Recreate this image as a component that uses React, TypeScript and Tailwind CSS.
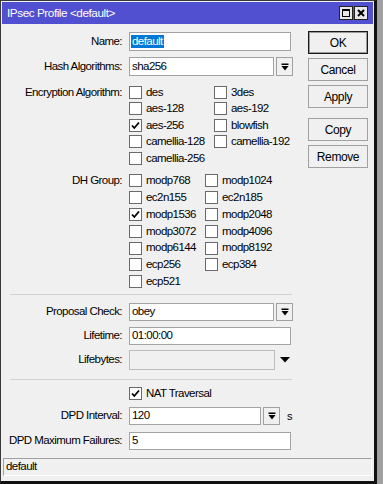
import React from "react";

const FONT = { fontFamily: '"Liberation Sans", Arial, sans-serif' };

function Check({ checked }: { checked?: boolean }) {
  return (
    <div className="w-[13px] h-[13px] border border-[#6a6a6a] bg-white flex items-center justify-center shrink-0">
      {checked && (
        <svg width="11" height="11" viewBox="0 0 11 11">
          <path d="M2 5.5 L4.3 8 L9 2.5" stroke="#000" strokeWidth="1.8" fill="none" />
        </svg>
      )}
    </div>
  );
}

function DropIcon() {
  return (
    <svg width="8" height="8" viewBox="0 0 8 8">
      <rect x="0.5" y="0.5" width="7" height="1.5" fill="#000" />
      <polygon points="0.5,3 7.5,3 4,7.5" fill="#000" />
    </svg>
  );
}

function DropBtn({ h = 19 }: { h?: number }) {
  return (
    <div
      className="w-[17px] border border-[#a0a0a0] bg-[#f0f0f0] flex items-center justify-center shrink-0"
      style={{ height: h }}
    >
      <DropIcon />
    </div>
  );
}

function Label({ children }: { children: React.ReactNode }) {
  return <div className="w-[121px] text-right shrink-0 pr-[1px] whitespace-nowrap">{children}</div>;
}

function Input({ w, h = 19, children, disabled }: { w: number; h?: number; children?: React.ReactNode; disabled?: boolean }) {
  return (
    <div
      className={`border ${disabled ? "border-[#bcbcbc] bg-[#f0f0f0]" : "border-[#a3a3a3] bg-white"} px-[2px] flex items-center shrink-0 whitespace-nowrap`}
      style={{ width: w, height: h }}
    >
      {children}
    </div>
  );
}

function CheckItem({ label, checked, w }: { label: string; checked?: boolean; w?: number }) {
  return (
    <div className="flex items-center gap-[4px]" style={w ? { width: w } : undefined}>
      <Check checked={checked} />
      <span className="whitespace-nowrap">{label}</span>
    </div>
  );
}

function Btn({ children, def }: { children: React.ReactNode; def?: boolean }) {
  return (
    <div
      className={`w-[60px] h-[23px] flex items-center justify-center bg-[#f0f0f0] text-[12px] tracking-[-0.4px] ${
        def ? "border border-[#1a1a1a] shadow-[inset_0_0_0_1px_#9a9a9a]" : "border border-[#a0a0a0]"
      }`}
    >
      {children}
    </div>
  );
}

export default function App() {
  const enc: [string, boolean, string | null, boolean][] = [
    ["des", false, "3des", false],
    ["aes-128", false, "aes-192", false],
    ["aes-256", true, "blowfish", false],
    ["camellia-128", false, "camellia-192", false],
    ["camellia-256", false, null, false],
  ];
  const dh: [string, boolean, string | null][] = [
    ["modp768", false, "modp1024"],
    ["ec2n155", false, "ec2n185"],
    ["modp1536", true, "modp2048"],
    ["modp3072", false, "modp4096"],
    ["modp6144", false, "modp8192"],
    ["ecp256", false, "ecp384"],
    ["ecp521", false, null],
  ];
  return (
    <div className="w-[383px] h-[484px] bg-[#a0a0a0] text-[11.5px] tracking-[-0.55px] text-black leading-none" style={FONT}>
      <div className="w-[377px] h-[484px] bg-[#f0f0f0] border-l border-t border-[#3a3a3a] border-r-[3px] border-b-[3px] border-r-[#111] border-b-[#111] p-[1px] flex flex-col">
        {/* title bar */}
        <div className="h-[22px] bg-[#5050d0] flex items-center pl-[5px] pr-[5px] shrink-0">
          <span className="text-white text-[11.75px] tracking-[-0.45px] flex-1">IPsec Profile &lt;default&gt;</span>
          <div className="flex gap-[1px]">
            <div className="w-[14px] h-[14px] bg-[#e8e8e8] border border-[#222] flex items-center justify-center">
              <div className="w-[8px] h-[8px] border border-black border-t-2" />
            </div>
            <div className="w-[14px] h-[14px] bg-[#e8e8e8] border border-[#222] flex items-center justify-center">
              <svg width="8" height="8" viewBox="0 0 8 8">
                <path d="M1 1 L7 7 M7 1 L1 7" stroke="#000" strokeWidth="2" />
              </svg>
            </div>
          </div>
        </div>

        {/* body */}
        <div className="flex flex-1">
          <div className="w-[300px] pt-[8px] flex flex-col">
            <div className="flex items-center h-[19px]">
              <Label>Name:</Label>
              <div className="ml-[6px]">
                <Input w={162}>
                  <span className="bg-[#0078d7] text-white px-[1px] py-[1px] -ml-[1px]">default</span>
                </Input>
              </div>
            </div>
            <div className="flex items-center h-[19px] mt-[6px]">
              <Label>Hash Algorithms:</Label>
              <div className="ml-[6px] flex gap-[2px]">
                <Input w={145}>sha256</Input>
                <DropBtn />
              </div>
            </div>

            {/* encryption */}
            <div className="flex mt-[8px]">
              <div className="h-[16.5px] flex items-center">
                <Label>Encryption Algorithm:</Label>
              </div>
              <div className="ml-[6px] flex flex-col">
                {enc.map(([a, ac, b, bc]) => (
                  <div key={a} className="h-[16.5px] flex items-center">
                    <CheckItem label={a} checked={ac} w={85} />
                    {b && <CheckItem label={b} checked={bc} />}
                  </div>
                ))}
              </div>
            </div>

            {/* DH */}
            <div className="flex mt-[6px]">
              <div className="h-[16.8px] flex items-center">
                <Label>DH Group:</Label>
              </div>
              <div className="ml-[6px] flex flex-col">
                {dh.map(([a, ac, b]) => (
                  <div key={a} className="h-[16.8px] flex items-center">
                    <CheckItem label={a} checked={ac} w={76} />
                    {b && <CheckItem label={b} />}
                  </div>
                ))}
              </div>
            </div>

            <div className="ml-[8px] w-[282px] h-px bg-[#d2d2d2] mt-[4px]" />

            <div className="flex items-center h-[18px] mt-[8px]">
              <Label>Proposal Check:</Label>
              <div className="ml-[6px] flex gap-[2px]">
                <Input w={145} h={18}>obey</Input>
                <DropBtn h={18} />
              </div>
            </div>
            <div className="flex items-center h-[18px] mt-[6px]">
              <Label>Lifetime:</Label>
              <div className="ml-[6px]">
                <Input w={162} h={18}>01:00:00</Input>
              </div>
            </div>
            <div className="flex items-center h-[20px] mt-[5px]">
              <Label>Lifebytes:</Label>
              <div className="ml-[6px] flex items-center">
                <Input w={146} h={20} disabled />
                <svg width="10" height="6" viewBox="0 0 10 6" className="ml-[5px]">
                  <polygon points="0,0 10,0 5,5.5" fill="#000" />
                </svg>
              </div>
            </div>

            <div className="ml-[8px] w-[282px] h-px bg-[#d2d2d2] mt-[9px]" />

            <div className="flex items-center h-[13px] mt-[7px]">
              <div className="w-[121px] shrink-0" />
              <div className="ml-[6px]">
                <CheckItem label="NAT Traversal" checked />
              </div>
            </div>
            <div className="flex items-center h-[18px] mt-[7px]">
              <Label>DPD Interval:</Label>
              <div className="ml-[6px] flex items-center gap-[2px]">
                <Input w={132} h={18}>120</Input>
                <DropBtn h={18} />
                <span className="ml-[5px] text-[11px]">s</span>
              </div>
            </div>
            <div className="flex items-center h-[18px] mt-[7px]">
              <Label>DPD Maximum Failures:</Label>
              <div className="ml-[6px]">
                <Input w={162} h={18}>5</Input>
              </div>
            </div>
          </div>

          <div className="ml-[6px] pt-[7px] flex flex-col">
            <Btn def>OK</Btn>
            <div className="mt-[4px]"><Btn>Cancel</Btn></div>
            <div className="mt-[4px]"><Btn>Apply</Btn></div>
            <div className="mt-[10px]"><Btn>Copy</Btn></div>
            <div className="mt-[4px]"><Btn>Remove</Btn></div>
          </div>
        </div>

        {/* status bar */}
        <div className="mx-[1px] mb-[4px] h-[18px] border-t border-l border-[#a0a0a0] border-r border-b border-r-white border-b-white flex items-center pl-[2px] shrink-0">
          default
        </div>
      </div>
    </div>
  );
}
